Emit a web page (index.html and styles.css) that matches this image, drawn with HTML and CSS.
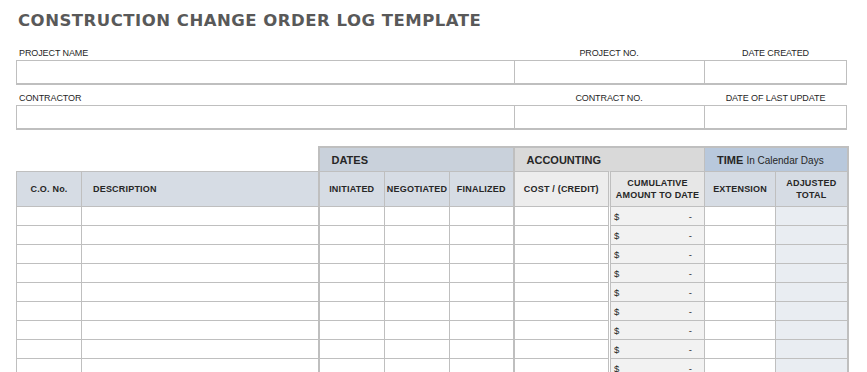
FILE: index.html
```html
<!DOCTYPE html>
<html>
<head>
<meta charset="utf-8">
<link rel="stylesheet" href="styles.css">
</head>
<body>
<div class="page">
  <h1 class="title">CONSTRUCTION CHANGE ORDER LOG TEMPLATE</h1>
  <div class="fields">
    <div class="lbl">PROJECT NAME</div>
    <div class="lbl center">PROJECT NO.</div>
    <div class="lbl center">DATE CREATED</div>
    <div class="box"></div>
    <div class="box mid"></div>
    <div class="box last"></div>
    <div class="lbl gap">CONTRACTOR</div>
    <div class="lbl center gap">CONTRACT NO.</div>
    <div class="lbl center gap">DATE OF LAST UPDATE</div>
    <div class="box"></div>
    <div class="box mid"></div>
    <div class="box last"></div>
  </div>
  <table class="log">
    <colgroup>
      <col class="c-co"><col class="c-desc"><col class="c-init"><col class="c-neg"><col class="c-fin"><col class="c-cost"><col class="c-cum"><col class="c-ext"><col class="c-adj">
    </colgroup>
    <thead>
      <tr class="grp">
        <th colspan="2" class="blank"></th>
        <th colspan="3" class="g-dates">DATES</th>
        <th colspan="2" class="g-acct">ACCOUNTING</th>
        <th colspan="2" class="g-time">TIME <span class="thin">In Calendar Days</span></th>
      </tr>
      <tr class="hdr">
        <th class="h-blue co">C.O. No.</th>
        <th class="h-blue desc">DESCRIPTION</th>
        <th class="h-blue thick-l">INITIATED</th>
        <th class="h-blue">NEGOTIATED</th>
        <th class="h-blue">FINALIZED</th>
        <th class="h-gray thick-l">COST / (CREDIT)</th>
        <th class="h-gray2 dbl-l">CUMULATIVE<br>AMOUNT TO DATE</th>
        <th class="h-blue">EXTENSION</th>
        <th class="h-blue thick-r">ADJUSTED<br>TOTAL</th>
      </tr>
    </thead>
    <tbody>
      <tr><td></td><td></td><td class="thick-l"></td><td></td><td></td><td class="thick-l"></td><td class="cum dbl-l"><span>$</span><span>-</span></td><td></td><td class="adj thick-r"></td></tr>
      <tr><td></td><td></td><td class="thick-l"></td><td></td><td></td><td class="thick-l"></td><td class="cum dbl-l"><span>$</span><span>-</span></td><td></td><td class="adj thick-r"></td></tr>
      <tr><td></td><td></td><td class="thick-l"></td><td></td><td></td><td class="thick-l"></td><td class="cum dbl-l"><span>$</span><span>-</span></td><td></td><td class="adj thick-r"></td></tr>
      <tr><td></td><td></td><td class="thick-l"></td><td></td><td></td><td class="thick-l"></td><td class="cum dbl-l"><span>$</span><span>-</span></td><td></td><td class="adj thick-r"></td></tr>
      <tr><td></td><td></td><td class="thick-l"></td><td></td><td></td><td class="thick-l"></td><td class="cum dbl-l"><span>$</span><span>-</span></td><td></td><td class="adj thick-r"></td></tr>
      <tr><td></td><td></td><td class="thick-l"></td><td></td><td></td><td class="thick-l"></td><td class="cum dbl-l"><span>$</span><span>-</span></td><td></td><td class="adj thick-r"></td></tr>
      <tr><td></td><td></td><td class="thick-l"></td><td></td><td></td><td class="thick-l"></td><td class="cum dbl-l"><span>$</span><span>-</span></td><td></td><td class="adj thick-r"></td></tr>
      <tr><td></td><td></td><td class="thick-l"></td><td></td><td></td><td class="thick-l"></td><td class="cum dbl-l"><span>$</span><span>-</span></td><td></td><td class="adj thick-r"></td></tr>
      <tr><td></td><td></td><td class="thick-l"></td><td></td><td></td><td class="thick-l"></td><td class="cum dbl-l"><span>$</span><span>-</span></td><td></td><td class="adj thick-r"></td></tr>
      <tr><td></td><td></td><td class="thick-l"></td><td></td><td></td><td class="thick-l"></td><td class="cum dbl-l"><span>$</span><span>-</span></td><td></td><td class="adj thick-r"></td></tr>
    </tbody>
  </table>
</div>
</body>
</html>
```
FILE: styles.css
```css
html, body {
  margin: 0;
  padding: 0;
  background: #ffffff;
  overflow: hidden;
}
body {
  font-family: "Liberation Sans", Arial, sans-serif;
  color: #262626;
}
.page {
  padding: 0 0 0 16px;
  width: 831px;
}
.title {
  margin: 0;
  padding: 11px 0 0 2px;
  height: 32px;
  box-sizing: border-box;
  font-family: "DejaVu Sans", sans-serif;
  font-weight: bold;
  font-size: 16.5px;
  line-height: 20px;
  color: #595959;
  letter-spacing: 0.5px;
}
.fields {
  margin-top: 15px;
  display: grid;
  grid-template-columns: 498px 190px 143px;
}
.lbl {
  font-size: 9px;
  line-height: 13px;
  height: 13px;
  color: #262626;
  padding-left: 3px;
  letter-spacing: -0.1px;
}
.lbl.center {
  text-align: center;
  padding-left: 0;
}
.lbl.gap {
  margin-top: 7px;
}
.box {
  height: 22px;
  border-top: 1px solid #bfbfbf;
  border-bottom: 2px solid #bfbfbf;
  border-left: 1px solid #bfbfbf;
}
.box.last {
  border-right: 1px solid #bfbfbf;
}
.log {
  margin-top: 16px;
  border-collapse: collapse;
  table-layout: fixed;
  width: 831px;
}
.c-co { width: 65px; }
.c-desc { width: 237px; }
.c-init { width: 66px; }
.c-neg { width: 65px; }
.c-fin { width: 64px; }
.c-cost { width: 96px; }
.c-cum { width: 95px; }
.c-ext { width: 71px; }
.c-adj { width: 72px; }
.log th, .log td {
  border: 1px solid #bfbfbf;
  padding: 0;
}
.grp th {
  height: 23px;
  text-align: left;
  padding-left: 12px;
  font-size: 11px;
  font-weight: bold;
  color: #262626;
  border-top: 2px solid #bfbfbf;
}
.grp th.blank {
  border: none;
  border-bottom: 1px solid #bfbfbf;
  background: transparent;
}
.g-dates {
  background: #c9d1db;
  border-left: 2px solid #bfbfbf !important;
}
.g-acct {
  background: #d9d9d9;
  border-left: 2px solid #bfbfbf !important;
}
.g-time {
  background: #b8c8dc;
  border-right: 2px solid #bfbfbf !important;
}
.thin {
  font-weight: normal;
  font-size: 10px;
}
.hdr th {
  height: 34px;
  font-size: 9px;
  font-weight: bold;
  line-height: 12px;
  text-align: center;
  color: #262626;
  letter-spacing: 0.2px;
}
.hdr th.desc {
  text-align: left;
  padding-left: 11px;
}
.h-blue { background: #d6dce4; }
.h-gray { background: #ededed; }
.h-gray2 { background: #e7e7e7; }
.thick-l { border-left: 2px solid #bfbfbf !important; }
.thick-r { border-right: 2px solid #bfbfbf !important; }
.dbl-l { border-left: 3px double #bfbfbf !important; }
.log tbody td {
  height: 18px;
}
.cum {
  background: #f2f2f2;
  font-size: 9.5px;
  color: #262626;
}
.cum span:first-child {
  float: left;
  padding-left: 3px;
}
.cum span:last-child {
  float: right;
  padding-right: 12px;
}
.adj {
  background: #e9edf2;
}
```
